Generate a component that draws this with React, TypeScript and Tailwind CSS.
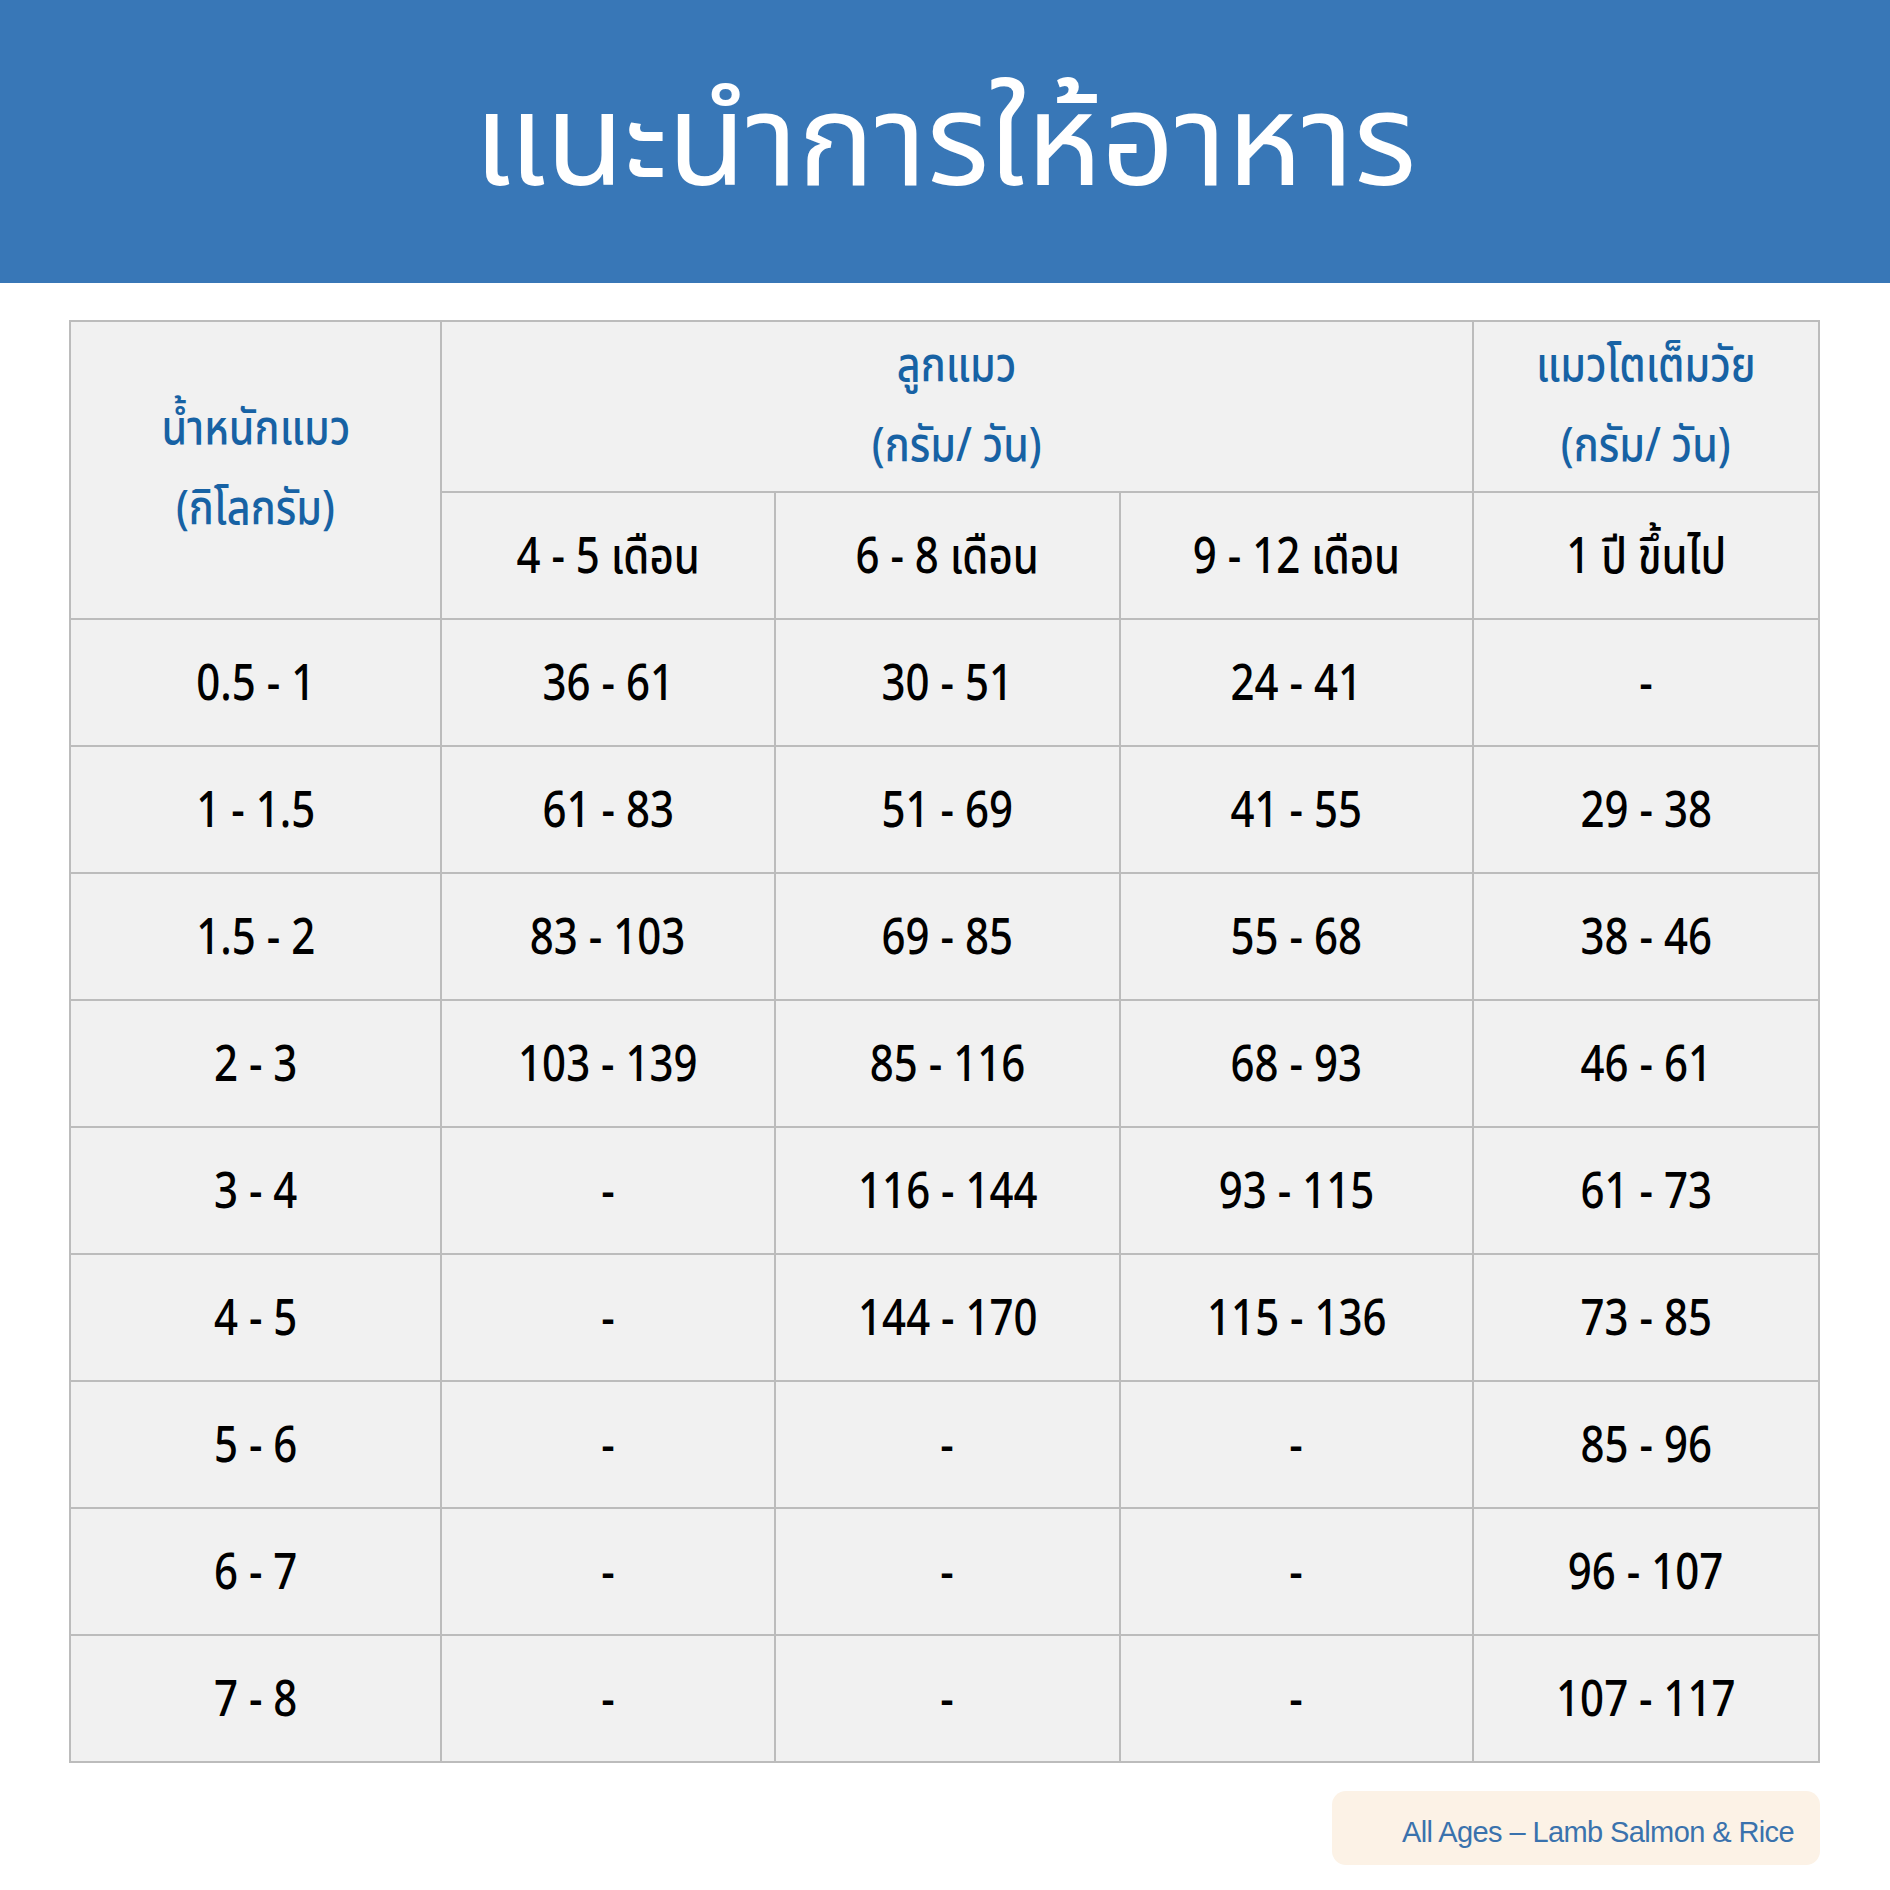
const thai = "font-['Noto_Sans_Thai','Noto_Sans','Liberation_Sans',sans-serif]";

type Row = [string, string, string, string, string];

const rows: Row[] = [
  ["0.5 - 1", "36 - 61", "30 - 51", "24 - 41", "-"],
  ["1 - 1.5", "61 - 83", "51 - 69", "41 - 55", "29 - 38"],
  ["1.5 - 2", "83 - 103", "69 - 85", "55 - 68", "38 - 46"],
  ["2 - 3", "103 - 139", "85 - 116", "68 - 93", "46 - 61"],
  ["3 - 4", "-", "116 - 144", "93 - 115", "61 - 73"],
  ["4 - 5", "-", "144 - 170", "115 - 136", "73 - 85"],
  ["5 - 6", "-", "-", "-", "85 - 96"],
  ["6 - 7", "-", "-", "-", "96 - 107"],
  ["7 - 8", "-", "-", "-", "107 - 117"],
];

function HeadText({ lines }: { lines: string[] }) {
  return (
    <div className="flex flex-col items-center text-[48px] font-medium leading-[80px] text-[#1762a4]">
      {lines.map((l) => (
        <span key={l} className="inline-block scale-x-[0.86] whitespace-nowrap">
          {l}
        </span>
      ))}
    </div>
  );
}

function Cell({ children }: { children: string }) {
  return (
    <div className="flex items-center justify-center bg-[#f1f1f1] pt-[6px] text-[50px] font-medium text-black">
      <span className="inline-block scale-x-[0.84] whitespace-nowrap">{children}</span>
    </div>
  );
}

export default function App() {
  return (
    <div className={`h-[1890px] w-[1890px] bg-white ${thai}`}>
      <header className="flex h-[283px] items-center justify-center bg-[#3877b7]">
        <h1 className="pt-2 text-[128px] font-normal leading-none text-white">แนะนำการให้อาหาร</h1>
      </header>

      <div className="ml-[69px] mt-[37px] w-[1751px]">
        <div className="grid grid-cols-[369px_332px_343px_351px_344px] grid-rows-[169px_125px] gap-[2px] bg-[#bcbcbc] p-[2px]">
          <div className="row-span-2 flex items-center justify-center bg-[#f1f1f1]">
            <HeadText lines={["น้ำหนักแมว", "(กิโลกรัม)"]} />
          </div>
          <div className="col-span-3 flex items-center justify-center bg-[#f1f1f1]">
            <HeadText lines={["ลูกแมว", "(กรัม/ วัน)"]} />
          </div>
          <div className="flex items-center justify-center bg-[#f1f1f1]">
            <HeadText lines={["แมวโตเต็มวัย", "(กรัม/ วัน)"]} />
          </div>
          {["4 - 5 เดือน", "6 - 8 เดือน", "9 - 12 เดือน", "1 ปี ขึ้นไป"].map((t) => (
            <Cell key={t}>{t}</Cell>
          ))}
        </div>
        <div className="grid grid-cols-[369px_332px_343px_351px_344px] auto-rows-[125px] gap-[2px] bg-[#bcbcbc] px-[2px] pb-[2px]">
          {rows.map((r) => r.map((c, i) => <Cell key={r[0] + i}>{c}</Cell>))}
        </div>

        <div className="mt-[28px] flex justify-end">
          <div className="flex h-[74px] w-[488px] items-center justify-end rounded-[14px] bg-[#fcf2e6] pr-[26px] pt-[9px] font-['Liberation_Sans',sans-serif] text-[29px] tracking-[-0.6px] text-[#3a72ad]">
            All Ages – Lamb Salmon &amp; Rice
          </div>
        </div>
      </div>
    </div>
  );
}
